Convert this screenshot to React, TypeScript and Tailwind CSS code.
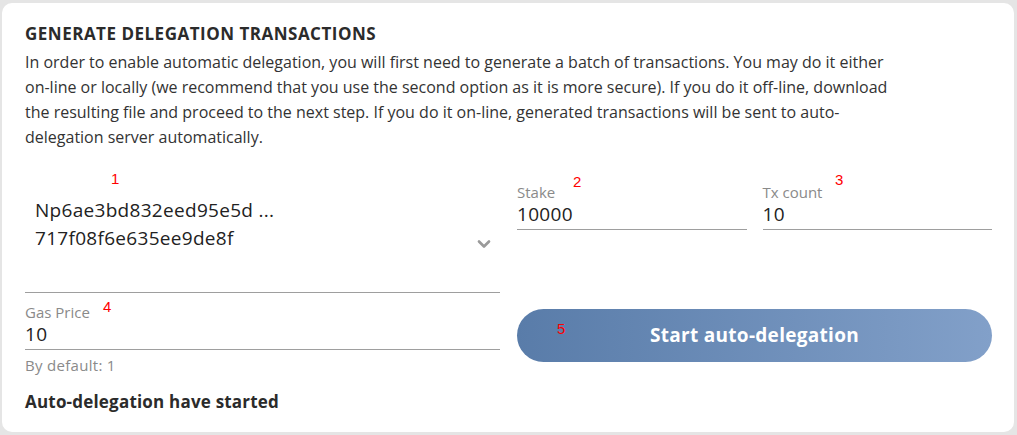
import { ChevronDown } from 'lucide-react'

const font = { fontFamily: '"Open Sans", "Noto Sans", sans-serif' }

function Mark({ n, className }: { n: string; className: string }) {
  // red annotation numbers laid over the form
  return (
    <span className={`pointer-events-none absolute font-['Liberation_Sans',sans-serif] text-[15px] leading-none text-[#ff0000] ${className}`}>
      {n}
    </span>
  )
}

function Field({ label, value }: { label: string; value: string }) {
  return (
    <div className="flex flex-col">
      <span className="text-[15px] leading-[18px] text-[#8a8a8a]">{label}</span>
      <span className="border-b border-[#9e9e9e] pb-[2px] text-[19px] leading-[26px] tracking-[0.3px] text-[#222]">{value}</span>
    </div>
  )
}

export default function App() {
  return (
    <div className="h-[435px] w-[1017px] bg-[#e5e5e5] pl-[2px] pr-[3px] pt-[3px] pb-[3px]" style={font}>
      <div className="relative h-full rounded-[10px] bg-white px-[23px] pt-[20px] text-[#333]">
        <h2 className="text-[17px] font-bold leading-[22px] tracking-[0.5px] text-[#2b2b2b]">GENERATE DELEGATION TRANSACTIONS</h2>
        <p className="mt-[5px] w-[872px] text-[16px] leading-[25px] text-[#333]">
          In order to enable automatic delegation, you will first need to generate a batch of transactions. You may do it either on-line or locally (we recommend that you use the second option as it is more secure). If you do it off-line, download the resulting file and proceed to the next step. If you do it on-line, generated transactions will be sent to auto-delegation server automatically.
        </p>

        <div className="mt-[33px] grid grid-cols-[475px_1fr] gap-x-[17px]">
          <div className="flex flex-col">
            <div className="flex h-[110px] items-start border-b border-[#9e9e9e] pl-[10px] pr-[6px] pt-[13px]">
              <div className="flex-1 text-[19px] leading-[28px] tracking-[0.3px] text-[#222]">
                <div>Np6ae3bd832eed95e5d ...</div>
                <div>717f08f6e635ee9de8f</div>
              </div>
              <ChevronDown className="mt-[38px] h-[20px] w-[20px] text-[#9a9a9a]" strokeWidth={3.2} />
            </div>

            <div className="mt-[10px]">
              <Field label="Gas Price" value="10" />
              <div className="mt-[6px] text-[15px] leading-[18px] tracking-[0.3px] text-[#8a8a8a]">By default: 1</div>
              <div className="mt-[17px] text-[17px] font-bold leading-[22px] tracking-[0.2px] text-[#2b2b2b]">Auto-delegation have started</div>
            </div>
          </div>

          <div className="flex flex-col">
            <div className="grid grid-cols-2 gap-x-[16px]">
              <Field label="Stake" value="10000" />
              <Field label="Tx count" value="10" />
            </div>
            <button className="mt-[79px] flex h-[53px] w-[475px] items-center justify-center rounded-full bg-gradient-to-r from-[#597ca9] to-[#82a0c9] text-[19px] font-bold tracking-[0.3px] text-white">
              Start auto-delegation
            </button>
          </div>
        </div>

        <Mark n="1" className="left-[109px] top-[168px]" />
        <Mark n="2" className="left-[571px] top-[171px]" />
        <Mark n="3" className="left-[833px] top-[169px]" />
        <Mark n="4" className="left-[101px] top-[296px]" />
        <Mark n="5" className="left-[555px] top-[318px]" />
      </div>
    </div>
  )
}
